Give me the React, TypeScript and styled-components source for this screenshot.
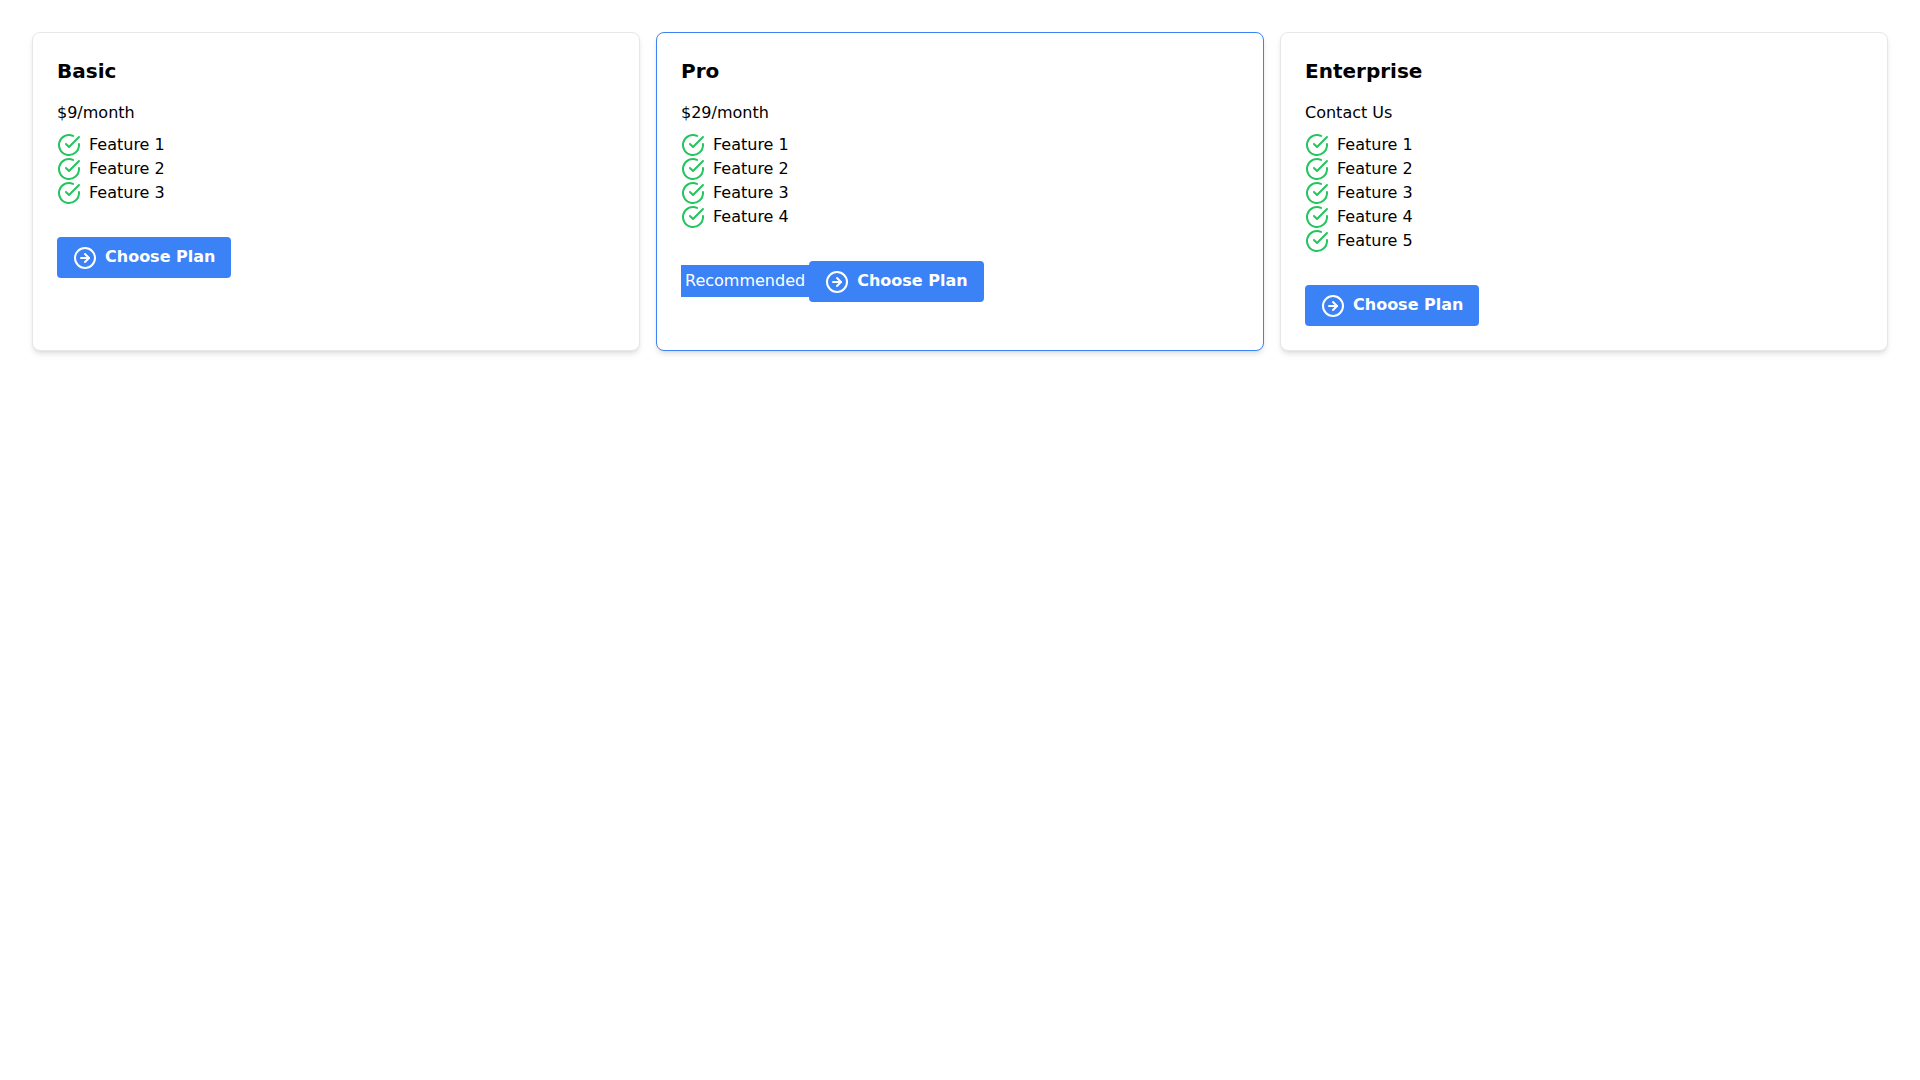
import React from 'react'
import styled, { createGlobalStyle } from 'styled-components'
import { FiArrowRightCircle, FiCheckCircle } from 'react-icons/fi'

interface Plan {
  name: string
  price: string
  features: string[]
  recommended?: boolean
}

const plans: Plan[] = [
  {
    name: 'Basic',
    price: '$9/month',
    features: ['Feature 1', 'Feature 2', 'Feature 3'],
  },
  {
    name: 'Pro',
    price: '$29/month',
    features: ['Feature 1', 'Feature 2', 'Feature 3', 'Feature 4'],
    recommended: true,
  },
  {
    name: 'Enterprise',
    price: 'Contact Us',
    features: ['Feature 1', 'Feature 2', 'Feature 3', 'Feature 4', 'Feature 5'],
  },
]

const GlobalStyle = createGlobalStyle`
  *, *::before, *::after {
    box-sizing: border-box;
  }
  body {
    margin: 0;
    background-color: #ffffff;
    color: #000000;
    font-family: 'DejaVu Sans', sans-serif;
    font-size: 16px;
    line-height: 24px;
  }
`

const PlanGrid = styled.main`
  display: grid;
  grid-template-columns: repeat(3, minmax(0, 1fr));
  gap: 16px;
  padding: 32px;
`

const PlanCard = styled.section<{ $recommended?: boolean }>`
  padding: 24px;
  border: 1px solid ${({ $recommended }) => ($recommended ? '#3b82f6' : '#e5e7eb')};
  border-radius: 8px;
  background-color: #ffffff;
  box-shadow: 0 4px 6px -1px rgba(0, 0, 0, 0.1), 0 2px 4px -2px rgba(0, 0, 0, 0.1);
`

const PlanName = styled.h2`
  margin: 0 0 16px;
  font-size: 20px;
  line-height: 28px;
  font-weight: 700;
`

const Price = styled.p`
  margin: 0 0 8px;
`

const FeatureList = styled.ul`
  margin: 0 0 32px;
  padding: 0;
  list-style: none;
`

const Feature = styled.li`
  display: flex;
  align-items: center;
  gap: 8px;
`

const CheckIcon = styled(FiCheckCircle)`
  color: #22c55e;
`

const Badge = styled.span`
  display: inline-block;
  padding: 4px;
  background-color: #3b82f6;
  color: #ffffff;
`

const ChooseButton = styled.button`
  padding: 8px 16px;
  border: none;
  border-radius: 4px;
  background-color: #3b82f6;
  color: #ffffff;
  font: inherit;
  font-weight: 700;
  cursor: pointer;
  &:hover {
    background-color: #1d4ed8;
  }
`

const ArrowIcon = styled(FiArrowRightCircle)`
  display: inline-block;
  margin-right: 8px;
  vertical-align: middle;
`

export default function App() {
  return (
    <>
      <GlobalStyle />
      <PlanGrid>
        {plans.map((plan) => (
          <PlanCard key={plan.name} $recommended={plan.recommended}>
            <PlanName>{plan.name}</PlanName>
            <Price>{plan.price}</Price>
            <FeatureList>
              {plan.features.map((feature) => (
                <Feature key={feature}>
                  <CheckIcon size={24} />
                  {feature}
                </Feature>
              ))}
            </FeatureList>
            {plan.recommended && <Badge>Recommended</Badge>}
            <ChooseButton type="button">
              <ArrowIcon size={24} />
              Choose Plan
            </ChooseButton>
          </PlanCard>
        ))}
      </PlanGrid>
    </>
  )
}
